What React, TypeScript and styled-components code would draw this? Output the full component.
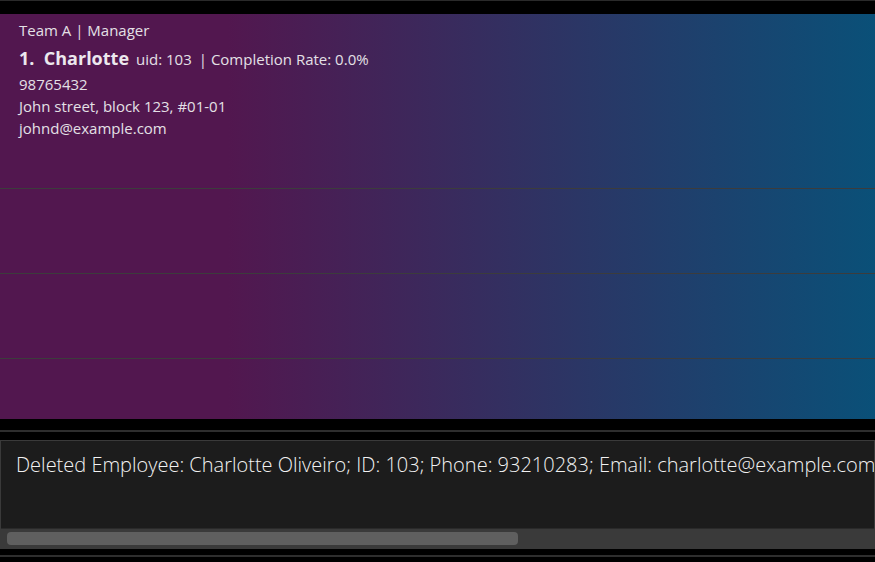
import styled, { createGlobalStyle } from "styled-components";

const GlobalStyle = createGlobalStyle`
  html, body {
    margin: 0;
    padding: 0;
    background: #000;
  }
  body {
    font-family: "Open Sans", "Noto Sans", sans-serif;
  }
`;

type Employee = {
  index: number;
  name: string;
  uid: number;
  team: string;
  role: string;
  rate: string;
  phone: string;
  address: string;
  email: string;
};

const employees: Employee[] = [
  {
    index: 1,
    name: "Charlotte",
    uid: 103,
    team: "Team A",
    role: "Manager",
    rate: "0.0%",
    phone: "98765432",
    address: "John street, block 123, #01-01",
    email: "johnd@example.com",
  },
];

function App() {
  return (
    <Window>
      <GlobalStyle />
      <TopEdge />
      <ListPanel>
        {employees.map((e) => (
          <Card key={e.uid}>
            <Meta>
              {e.team} | {e.role}
            </Meta>
            <TitleRow>
              <Name>
                {e.index}.&nbsp;&nbsp;{e.name}
              </Name>
              <Meta>uid: {e.uid}</Meta>
              <Meta>| Completion Rate: {e.rate}</Meta>
            </TitleRow>
            <Field>{e.phone}</Field>
            <Field>{e.address}</Field>
            <Field>{e.email}</Field>
          </Card>
        ))}
        <EmptyRow />
        <EmptyRow />
        <EmptyRow $last />
      </ListPanel>
      <Divider />
      <ResultBox>
        <ResultText>
          Deleted Employee: Charlotte Oliveiro; ID: 103; Phone: 93210283; Email: charlotte@example.com
        </ResultText>
        <ScrollTrack>
          <ScrollThumb />
        </ScrollTrack>
      </ResultBox>
      <Divider $bottom />
    </Window>
  );
}

const Window = styled.div`
  width: 875px;
  height: 562px;
  background: #000;
  display: flex;
  flex-direction: column;
  overflow: hidden;
`;

const TopEdge = styled.div`
  height: 1px;
  background: #2a2a2a;
  margin-bottom: 13px;
`;

const ListPanel = styled.div`
  height: 405px;
  flex-shrink: 0;
  display: flex;
  flex-direction: column;
  background: linear-gradient(to right, #52174f 26%, #0a5078 100%);
  overflow: hidden;
`;

const Card = styled.div`
  height: 175px;
  flex-shrink: 0;
  box-sizing: border-box;
  padding: 6px 19px 0;
  border-bottom: 1px solid #3c3c3c;
  color: #e4e0e6;
  display: flex;
  flex-direction: column;
`;

const EmptyRow = styled.div<{ $last?: boolean }>`
  height: 85px;
  flex-shrink: 0;
  box-sizing: border-box;
  border-bottom: ${(p) => (p.$last ? "none" : "1px solid #3c3c3c")};
`;

const Meta = styled.span`
  font-size: 15px;
  line-height: 20px;
  color: #e4e0e6;
`;

const TitleRow = styled.div`
  display: flex;
  align-items: baseline;
  gap: 7px;
  margin: 6px 0 3px;
  white-space: pre;
`;

const Name = styled.span`
  font-size: 18px;
  font-weight: 700;
  line-height: 24px;
  color: #ece8ee;
`;

const Field = styled.div`
  font-size: 15px;
  line-height: 22px;
  color: #e4e0e6;
`;

const Divider = styled.div<{ $bottom?: boolean }>`
  height: 2px;
  flex-shrink: 0;
  background: #2e2e2e;
  margin: ${(p) => (p.$bottom ? "6px 0 0" : "11px 0 8px")};
`;

const ResultBox = styled.div`
  height: 109px;
  flex-shrink: 0;
  box-sizing: border-box;
  border: 1px solid #3a3a3a;
  background: #1c1c1c;
  display: flex;
  flex-direction: column;
  overflow: hidden;
`;

const ResultText = styled.div`
  flex: 1;
  padding: 10px 0 0 15px;
  font-family: "Open Sans", "Noto Sans", sans-serif;
  font-weight: 300;
  font-size: 20px;
  line-height: 28px;
  color: #f2f2f2;
  white-space: nowrap;
`;

const ScrollTrack = styled.div`
  height: 19px;
  flex-shrink: 0;
  background: #3a3a3a;
  border-top: 1px solid #2a2a2a;
  display: flex;
  align-items: center;
  padding-left: 6px;
`;

const ScrollThumb = styled.div`
  width: 511px;
  height: 13px;
  border-radius: 4px;
  background: #5f5f5f;
`;

export default App;
